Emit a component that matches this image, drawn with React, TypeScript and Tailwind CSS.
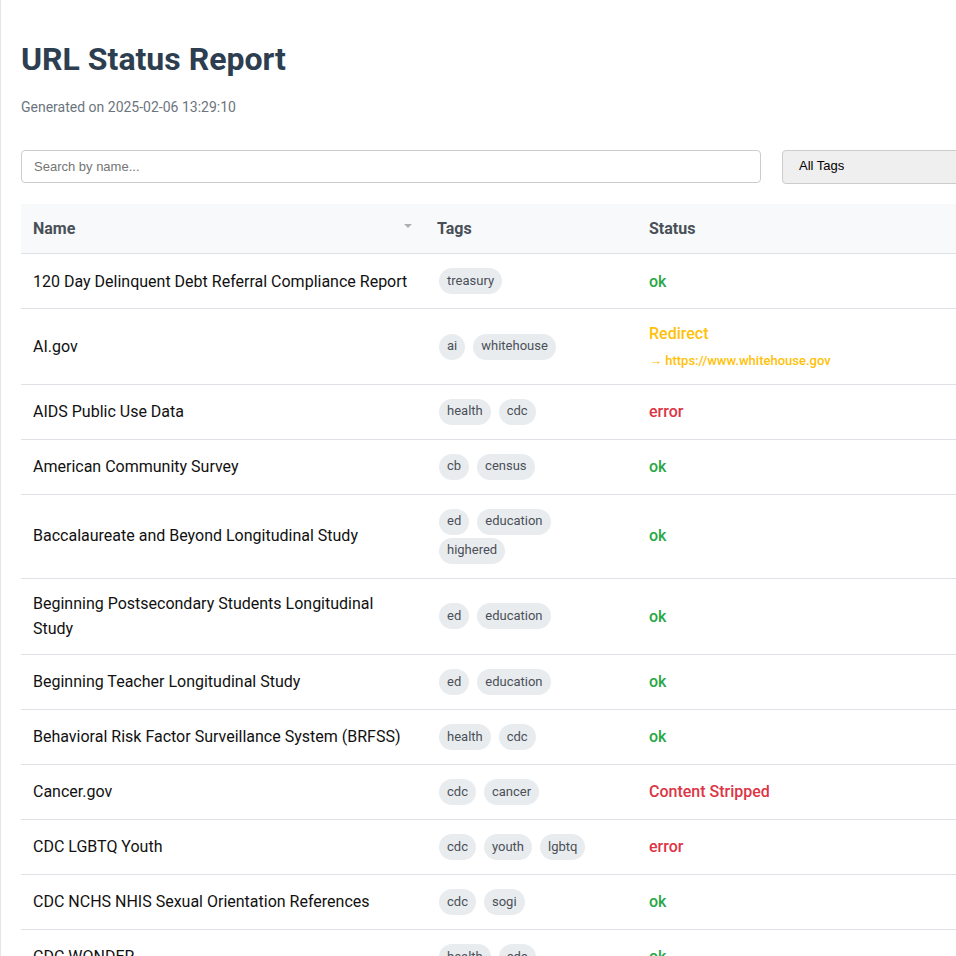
import React from 'react';

type Status = 'ok' | 'error' | 'redirect' | 'stripped';

interface Row {
  name: string;
  tags: string[];
  status: Status;
  target?: string;
}

const ROWS: Row[] = [
  { name: '120 Day Delinquent Debt Referral Compliance Report', tags: ['treasury'], status: 'ok' },
  { name: 'AI.gov', tags: ['ai', 'whitehouse'], status: 'redirect', target: 'https://www.whitehouse.gov' },
  { name: 'AIDS Public Use Data', tags: ['health', 'cdc'], status: 'error' },
  { name: 'American Community Survey', tags: ['cb', 'census'], status: 'ok' },
  { name: 'Baccalaureate and Beyond Longitudinal Study', tags: ['ed', 'education', 'highered'], status: 'ok' },
  { name: 'Beginning Postsecondary Students Longitudinal Study', tags: ['ed', 'education'], status: 'ok' },
  { name: 'Beginning Teacher Longitudinal Study', tags: ['ed', 'education'], status: 'ok' },
  { name: 'Behavioral Risk Factor Surveillance System (BRFSS)', tags: ['health', 'cdc'], status: 'ok' },
  { name: 'Cancer.gov', tags: ['cdc', 'cancer'], status: 'stripped' },
  { name: 'CDC LGBTQ Youth', tags: ['cdc', 'youth', 'lgbtq'], status: 'error' },
  { name: 'CDC NCHS NHIS Sexual Orientation References', tags: ['cdc', 'sogi'], status: 'ok' },
  { name: 'CDC WONDER', tags: ['health', 'cdc'], status: 'ok' },
  { name: 'Census Bureau Data', tags: ['cb', 'census'], status: 'ok' },
];

const StatusCell = ({ row }: { row: Row }) => {
  if (row.status === 'redirect') {
    return (
      <div>
        <div className="text-[#ffc107] font-medium">Redirect</div>
        <div className="mt-1 text-[13px] font-medium text-[#ffc107]">→ {row.target}</div>
      </div>
    );
  }
  if (row.status === 'error') return <span className="text-[#dc3545] font-medium">error</span>;
  if (row.status === 'stripped') return <span className="text-[#dc3545] font-medium">Content Stripped</span>;
  return <span className="text-[#28a745] font-medium">ok</span>;
};

export default function App() {
  return (
    <div className="w-[956px] h-[956px] overflow-hidden bg-white">
      <div
        className="w-[1200px] border-l border-[#e6e6e6] px-5 pt-[1px] text-[16px] leading-[1.6] text-[#212529]"
        style={{ fontFamily: 'Roboto, "Noto Sans", sans-serif' }}
      >
        <h1 className="mt-[39px] text-[32px] leading-[1.2] font-bold text-[#2c3e50]">URL Status Report</h1>
        <p className="mt-[18px] text-[14px] text-[#6c757d]">Generated on 2025-02-06 13:29:10</p>

        {/* filtres */}
        <div className="mt-[31px] flex items-center gap-[21px]" style={{ fontFamily: '"Liberation Sans", Arial, sans-serif' }}>
          <input
            type="text"
            placeholder="Search by name..."
            className="w-[740px] h-[33px] px-3 border border-[#ccc] rounded text-[13px] text-black placeholder:text-[#757575] outline-none"
          />
          <div className="w-[220px] h-[34px] flex items-center px-4 bg-[#efefef] border border-[#ccc] rounded text-[13px] text-black">
            All Tags
          </div>
        </div>

        {/* tableau */}
        <table className="mt-[20px] w-[1158px] table-fixed border-collapse">
          <colgroup>
            <col className="w-[404px]" />
            <col className="w-[212px]" />
            <col />
          </colgroup>
          <thead>
            <tr className="bg-[#f8f9fa] border-b border-[#dee2e6]">
              <th className="relative p-3 text-left font-bold text-[#495057]">
                Name
                <span className="absolute right-[13px] top-[20px] w-0 h-0 border-x-[4px] border-x-transparent border-t-[4px] border-t-[#b0b0b0]" />
              </th>
              <th className="p-3 text-left font-bold text-[#495057]">Tags</th>
              <th className="p-3 text-left font-bold text-[#495057]">Status</th>
            </tr>
          </thead>
          <tbody>
            {ROWS.map(row => (
              <tr key={row.name} className="border-b border-[#dee2e6]">
                <td className="p-3 align-middle text-[#111]">{row.name}</td>
                <td className="p-3 align-middle">
                  <div className="flex flex-wrap gap-x-2 gap-y-[3px] py-0.5 px-0.5">
                    {row.tags.map(t => (
                      <span
                        key={t}
                        className="h-[26px] flex items-center px-2 rounded-full bg-[#e9ecef] text-[13px] text-[#495057]"
                      >
                        {t}
                      </span>
                    ))}
                  </div>
                </td>
                <td className="p-3 align-middle">
                  <StatusCell row={row} />
                </td>
              </tr>
            ))}
          </tbody>
        </table>
      </div>
    </div>
  );
}
